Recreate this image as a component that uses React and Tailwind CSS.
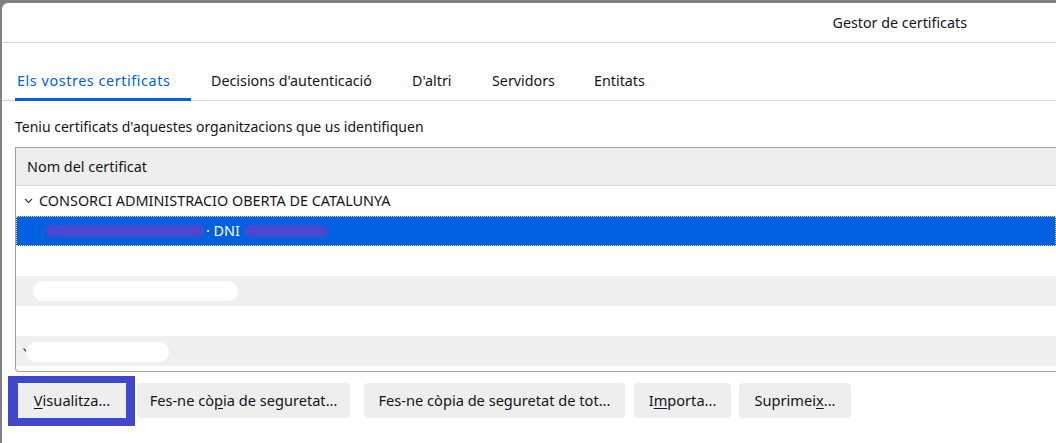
import React from 'react'

const font = { fontFamily: '"Noto Sans", "Open Sans", sans-serif' }

const tabs = [
  { label: 'Els vostres certificats', w: 'w-[176px]', active: true },
  { label: "Decisions d'autenticació", w: 'w-[183px]' },
  { label: "D'altri", w: 'w-[62px]' },
  { label: 'Servidors', w: 'w-[84px]' },
  { label: 'Entitats', w: 'w-[70px]' },
]

function Chevron() {
  return (
    <svg width="9" height="6" viewBox="0 0 9 6" className="mr-[6px]">
      <path d="M1 1 L4.5 4.5 L8 1" fill="none" stroke="#333" strokeWidth="1.1" />
    </svg>
  )
}

function Btn({ children, className }) {
  return (
    <button className={`h-[35px] rounded-[4px] bg-[#eeeeee] text-[14.6px] text-[#15141a] ${className}`}>
      {children}
    </button>
  )
}

export default function App() {
  return (
    <div className="h-[443px] w-[1056px] overflow-hidden bg-[#808080] pl-[2px] pt-[3px]" style={font}>
      <div className="flex h-full flex-col rounded-tl-[6px] bg-white text-[#15141a]">
        <div className="flex h-[40px] items-center justify-end border-b border-[#d6d6d6] pr-[89px] text-[14.3px]">
          Gestor de certificats
        </div>

        <div className="mt-[16px] flex h-[42px] gap-[18px] border-b border-[#d6d6d6] pl-[13px]">
          {tabs.map((t) => (
            <div
              key={t.label}
              className={`${t.w} -mb-px flex items-start pl-[2px] pt-[11px] text-[14.3px] ${
                t.active ? 'border-b-[3px] border-[#0061e0] tracking-[0.6px] text-[#0061e0]' : 'text-[#15141a]'
              }`}
            >
              <span className="whitespace-nowrap">{t.label}</span>
            </div>
          ))}
        </div>

        <p className="mt-[16px] pl-[13px] text-[14px] leading-[20px]">
          Teniu certificats d'aquestes organitzacions que us identifiquen
        </p>

        <div className="ml-[13px] mt-[10px] h-[225px] rounded-bl-[4px] border border-r-0 border-[#a0a0a0] text-[14.4px]">
          <div className="flex h-[38px] items-center border-b border-[#d6d6d6] bg-[#eeeeee] pl-[11px]">
            Nom del certificat
          </div>
          <div className="flex h-[30px] items-center pl-[8px]">
            <Chevron />
            CONSORCI ADMINISTRACIO OBERTA DE CATALUNYA
          </div>
          <div className="flex h-[30px] items-center bg-[#0061e0] text-white outline-1 -outline-offset-1 outline-dotted outline-[#f7d774]">
            <span className="ml-[29px] h-[12px] w-[160px] rounded-full bg-[#4848d0]" />
            <span className="ml-[1px] whitespace-nowrap">· DNI</span>
            <span className="ml-[4px] h-[12px] w-[84px] rounded-full bg-[#4848d0]" />
          </div>
          <div className="h-[30px]" />
          <div className="flex h-[30px] items-center bg-[#f0f0f0]">
            <span className="ml-[17px] h-[20px] w-[205px] rounded-full bg-white" />
          </div>
          <div className="h-[30px]" />
          <div className="flex h-[30px] items-center bg-[#f0f0f0]">
            <svg width="4" height="4" viewBox="0 0 4 4" className="ml-[7px] -mt-[2px]">
              <path d="M0.5 0.5 L3.5 3.5" stroke="#444" strokeWidth="1.2" />
            </svg>
            <span className="-ml-px mt-[2px] h-[20px] w-[143px] rounded-full bg-white" />
          </div>
        </div>

        <div className="mt-[11px] flex items-center pl-[16px]">
          <div className="relative">
            <Btn className="w-[108px]">
              <span className="underline underline-offset-2">V</span>isualitza...
            </Btn>
            <div className="pointer-events-none absolute -bottom-[8px] -left-[10px] -right-[9px] -top-[7px] border-[7px] border-l-[10px] border-r-[9px] border-b-[8px] border-[#3f48cc]" />
          </div>
          <Btn className="ml-[11px] w-[213px]">
            Fes-ne cò<span className="underline underline-offset-2">p</span>ia de seguretat...
          </Btn>
          <Btn className="ml-[14px] w-[261px]">Fes-ne còpia de seguretat de tot...</Btn>
          <Btn className="ml-[9px] w-[97px]">
            I<span className="underline underline-offset-2">m</span>porta...
          </Btn>
          <Btn className="ml-[8px] w-[112px]">
            Suprimei<span className="underline underline-offset-2">x</span>...
          </Btn>
        </div>
      </div>
    </div>
  )
}
